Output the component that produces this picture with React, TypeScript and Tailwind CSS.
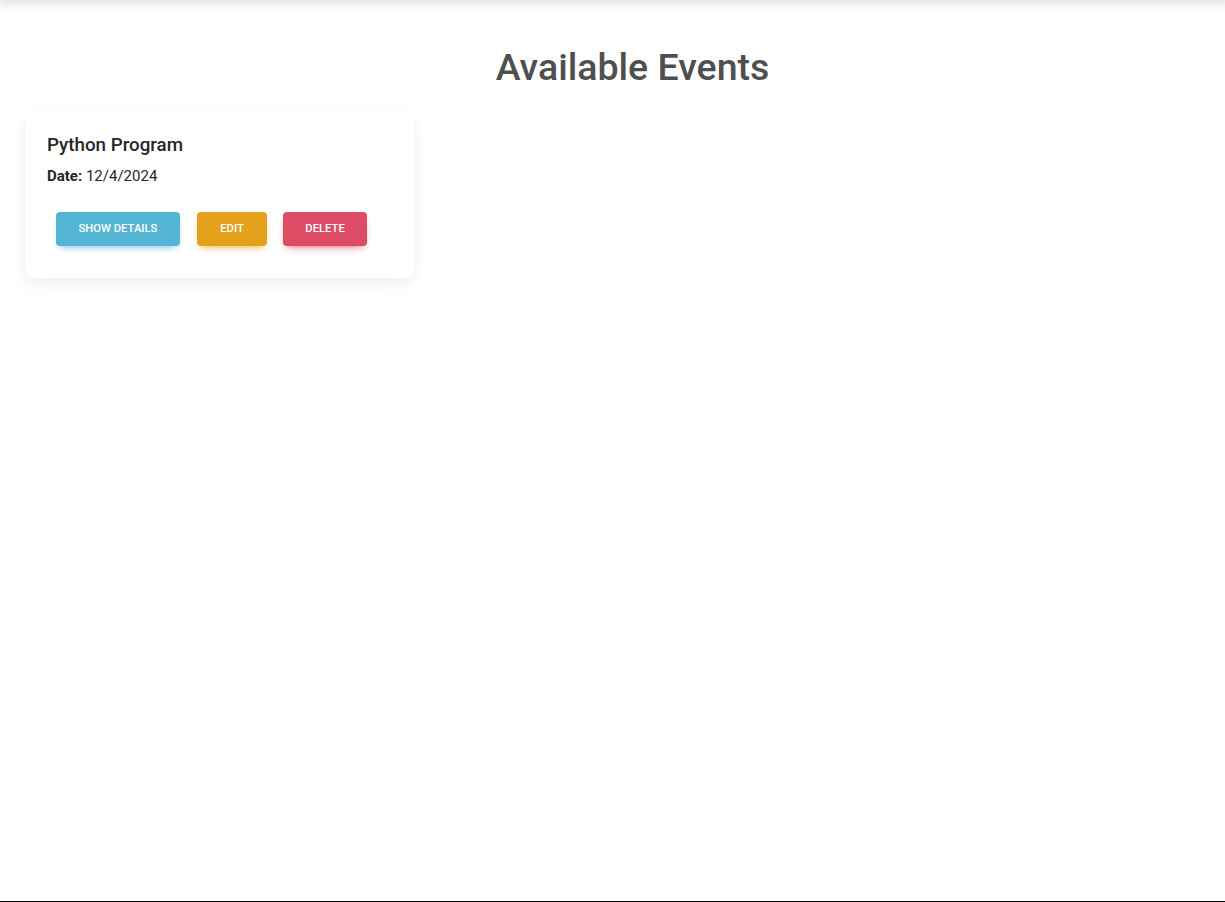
import React from 'react';

type EventItem = { id: number; name: string; date: string };

const events: EventItem[] = [{ id: 1, name: "Python Program", date: "12/4/2024" }];

const EventCard = ({ item }: { item: EventItem }) => {
  return (
    <div className="w-[389px] rounded-lg bg-white shadow-[0_2px_15px_-3px_rgba(0,0,0,0.07),0_10px_20px_-2px_rgba(0,0,0,0.04)] pl-[22px] pr-[22px] pt-[23px] pb-[24px]">
      <h5 className="text-[18.75px] leading-[1.2] font-medium text-[#262626] mb-[8.5px]">{item.name}</h5>
      <p className="text-[15px] leading-[1.5] text-[#262626] mb-4">
        <span className="font-bold">Date:</span> {item.date}
      </p>
      <div className="flex pl-px">
        <button className="m-2 mr-[9.5px] h-[34px] pt-[2px] px-[22.5px] rounded bg-[#54b4d3] text-white text-[11.25px] font-medium uppercase shadow-[0_4px_9px_-4px_#54b4d3]">
          Show Details
        </button>
        <button className="m-2 h-[34px] pt-[2px] px-[22.75px] rounded bg-[#e4a11b] text-white text-[11.25px] font-medium uppercase shadow-[0_4px_9px_-4px_#e4a11b]">
          Edit
        </button>
        <button className="m-2 h-[34px] pt-[2px] px-[22.75px] rounded bg-[#dc4c64] text-white text-[11.25px] font-medium uppercase shadow-[0_4px_9px_-4px_#dc4c64]">
          Delete
        </button>
      </div>
    </div>
  );
};

export default function App() {
  return (
    <div className="h-[902px] border-b border-black bg-white font-['Roboto',sans-serif] overflow-hidden">
      <header className="h-0 shadow-[0_0_10px_3px_rgba(0,0,0,0.18)]"></header>
      <h1 className="mt-[45px] pl-[40px] text-center text-[37.5px] leading-[1.2] font-medium text-[#4f4f4f]">
        Available Events
      </h1>
      <div className="mt-[21px] pl-[25px] flex gap-6">
        {events.map((item) => (
          <EventCard item={item} key={item.id} />
        ))}
      </div>
    </div>
  );
}
